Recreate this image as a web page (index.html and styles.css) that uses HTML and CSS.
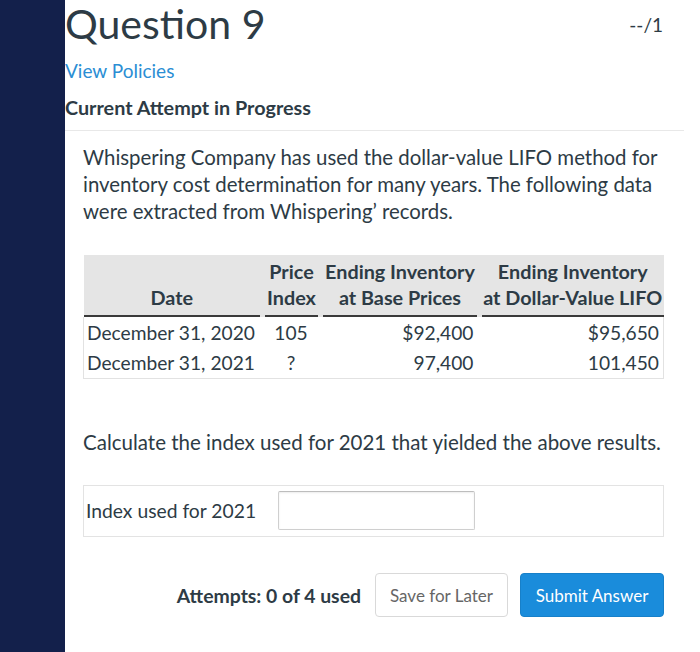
FILE: index.html
```html
<!DOCTYPE html>
<html>

<head>
    <meta charset="UTF-8">
    <link rel="stylesheet" href="styles.css">
</head>

<body>
    <div id="page">
        <div id="sidebar"></div>
        <div id="main">
            <div class="q_head">
                <h1>Question 9</h1>
                <span class="q_score">--/1</span>
            </div>
            <a class="q_policies" href="#">View Policies</a>
            <div class="q_attempt">Current Attempt in Progress</div>

            <div class="q_card">
                <p class="q_text">Whispering Company has used the dollar-value LIFO method for inventory cost determination for many years. The following data were extracted from Whispering’ records.</p>

                <table class="q_table">
                    <colgroup>
                        <col class="c_date">
                        <col class="c_index">
                        <col class="c_base">
                        <col class="c_lifo">
                    </colgroup>
                    <thead>
                        <tr>
                            <th class="c_date"><div>Date</div></th>
                            <th class="c_index"><div>Price<br>Index</div></th>
                            <th class="c_base"><div>Ending Inventory<br>at Base Prices</div></th>
                            <th class="c_lifo"><div>Ending Inventory<br>at Dollar-Value LIFO</div></th>
                        </tr>
                    </thead>
                    <tbody>
                        <tr>
                            <td class="c_date">December 31, 2020</td>
                            <td class="c_index">105</td>
                            <td class="c_base">$92,400</td>
                            <td class="c_lifo">$95,650</td>
                        </tr>
                        <tr>
                            <td class="c_date">December 31, 2021</td>
                            <td class="c_index">?</td>
                            <td class="c_base">97,400</td>
                            <td class="c_lifo">101,450</td>
                        </tr>
                    </tbody>
                </table>

                <p class="q_ask">Calculate the index used for 2021 that yielded the above results.</p>

                <div class="q_answer">
                    <label for="answer">Index used for 2021</label>
                    <input type="text" id="answer">
                </div>

                <div class="q_actions">
                    <span class="q_attempts">Attempts: 0 of 4 used</span>
                    <button class="btn_save">Save for Later</button>
                    <button class="btn_submit">Submit Answer</button>
                </div>
            </div>
        </div>
    </div>
</body>

</html>
```

FILE: styles.css
```css
body {
    margin: 0;
    padding: 0;
    background-color: #ffffff;
    font-family: "Lato", "Liberation Sans", sans-serif;
    color: #2d3b45;
}

#page {
    display: flex;
    min-height: 652px;
}

#sidebar {
    width: 65px;
    flex: none;
    background-color: #13204b;
}

#main {
    flex: 1;
    padding-right: 17px;
}

.q_head {
    display: flex;
    justify-content: space-between;
    align-items: flex-start;
}

.q_head h1 {
    margin: 0;
    font-size: 41px;
    font-weight: normal;
    line-height: 48px;
}

.q_score {
    margin-top: 13px;
    margin-right: 21px;
    font-size: 19px;
    line-height: 24px;
}

.q_policies {
    display: block;
    margin-top: 11px;
    font-size: 19px;
    line-height: 24px;
    color: #2b8ed4;
    text-decoration: none;
}

.q_attempt {
    margin-top: 12px;
    font-size: 19.8px;
    font-weight: bold;
    line-height: 24px;
}

.q_card {
    margin-top: 11px;
    padding: 13px 20px 0 18px;
    border-top: 1px solid #e8e8e8;
}

.q_text {
    margin: 0;
    font-size: 20.4px;
    line-height: 27px;
}

/* data table */
.q_table {
    margin-top: 30px;
    width: 580px;
    table-layout: fixed;
    border-collapse: collapse;
    font-size: 19.2px;
    line-height: 26px;
}

.q_table col.c_date {
    width: 179px;
}

.q_table col.c_index {
    width: 58px;
}

.q_table col.c_base {
    width: 159px;
}

.q_table col.c_lifo {
    width: 184px;
}

.q_table th {
    padding: 3px 0 0 0;
    background-color: #e5e5e5;
    font-size: 19.8px;
    font-weight: bold;
    text-align: center;
    vertical-align: bottom;
    white-space: nowrap;
}

.q_table th div {
    padding-bottom: 5px;
    border-bottom: 2px solid #3a3a3a;
    margin: 0 2.5px;
}

.q_table th.c_date div {
    margin-left: 0;
}

.q_table th.c_lifo div {
    margin-right: 0;
}

.q_table td {
    padding: 3px 4px 1px 3px;
    white-space: nowrap;
}

.q_table tbody tr:last-child td {
    padding-bottom: 2px;
}

.q_table tbody {
    border: 1px solid #e2e2e2;
    border-top: none;
}

.q_table td.c_index {
    text-align: center;
}

.q_table td.c_base,
.q_table td.c_lifo {
    text-align: right;
}

.q_table td.c_base {
    padding-right: 6px;
}

.q_ask {
    margin: 50px 0 0 0;
    font-size: 20.5px;
    line-height: 27px;
}

.q_answer {
    display: flex;
    align-items: center;
    margin-top: 29px;
    padding: 5px 4px 6px 2px;
    border: 1px solid #e3e3e3;
}

.q_answer label {
    width: 192px;
    flex: none;
    font-size: 19.3px;
}

.q_answer input {
    width: 191px;
    height: 37px;
    padding: 0 2px;
    border: 1px solid #cfcfcf;
    border-top-color: #bdbdbd;
    border-radius: 2px;
    box-shadow: inset 0 1px 2px rgba(0, 0, 0, 0.08);
    font-family: "Lato", "Liberation Sans", sans-serif;
    font-size: 18px;
}

.q_actions {
    display: flex;
    justify-content: flex-end;
    align-items: center;
    margin-top: 36px;
}

.q_attempts {
    margin-right: 14px;
    font-size: 19.4px;
    font-weight: bold;
}

.q_actions button {
    height: 44px;
    border-radius: 4px;
    font-family: "Lato", "Liberation Sans", sans-serif;
    font-size: 17px;
    cursor: pointer;
}

.btn_save {
    width: 133px;
    margin-right: 12px;
    background-color: #ffffff;
    border: 1px solid #d9d9d9;
    color: #666666;
}

.btn_submit {
    width: 144px;
    background-color: #1a8cdb;
    border: 1px solid #1780c9;
    color: #ffffff;
}
```
